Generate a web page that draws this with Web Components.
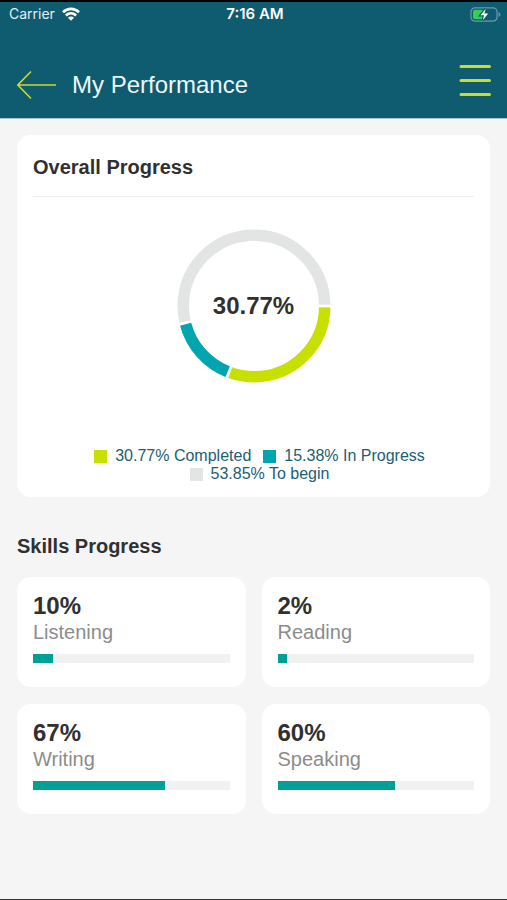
<!DOCTYPE html>
<html lang="en">
<head>
<meta charset="utf-8">
<meta name="viewport" content="width=device-width, initial-scale=1">
<title>My Performance</title>
<style>
body {
  margin: 0;
  background-color: #f5f5f5;
  color: #303030;
  font-family: "Liberation Sans", Arial, sans-serif;
}
</style>
</head>
<body>
<performance-page></performance-page>

<script>
/**
 * Builds a template from a markup string.
 */
function createTemplate (markup) {
  const template = document.createElement('template')
  template.innerHTML = markup
  return template
}

const statusBarTemplate = createTemplate(`
<style>
:host {
  display: grid;
  grid-template-columns: 1fr auto 1fr;
  align-items: center;
  height: 24px;
  padding: 0 6px 0 9px;
  color: #e4eff3;
  font-family: Inter, sans-serif;
  font-size: 14px;
  line-height: 24px;
}

.network {
  display: flex;
  align-items: center;
  gap: 7px;
}

.time {
  color: white;
  font-size: 15px;
  font-weight: 600;
}

.battery {
  justify-self: end;
}

svg {
  display: block;
}
</style>
<div class="network">
  <span>Carrier</span>
  <svg width="18" height="14" viewBox="0 0 18 14" fill="none" stroke="white" stroke-width="2.6">
    <path d="M1 5.2C5.6.8 12.4.8 17 5.2"/>
    <path d="M3.9 8.5c3-2.8 7.2-2.8 10.2 0"/>
    <path d="M9 13.8 5.9 10.7c1.8-1.6 4.4-1.6 6.2 0z" fill="white" stroke="none"/>
  </svg>
</div>
<span class="time"></span>
<svg class="battery" width="31" height="15" viewBox="0 0 31 15">
  <rect x="1" y=".8" width="26" height="13.4" rx="4" fill="none" stroke="#6b9baa" stroke-width="1.2"/>
  <path d="M28.6 5v5c2.4-.9 2.4-4.1 0-5z" fill="#6b9baa"/>
  <rect x="3" y="2.8" width="10.5" height="9.4" rx="2" fill="#33d058"/>
  <path d="M15.7 1.8 10.4 8.2h3.7l-1.4 5 5.5-6.6h-3.8z" fill="white" stroke="#0f5b70" stroke-width="2.4" paint-order="stroke"/>
</svg>
`)

customElements.define('status-bar',
  /**
   * Network, clock and battery row.
   */
  class extends HTMLElement {
    constructor () {
      super()
      this.attachShadow({ mode: 'open' })
        .appendChild(statusBarTemplate.content.cloneNode(true))
      this.time = this.shadowRoot.querySelector('.time')
    }

    connectedCallback () {
      this.time.textContent = this.getAttribute('time')
    }
  })

const headerTemplate = createTemplate(`
<style>
:host {
  display: block;
  background-color: #0f5b70;
  border-bottom: 1px solid #a9c5ce;
}

nav {
  display: flex;
  align-items: center;
  gap: 16px;
  padding: 26px 16px 0;
  height: 66px;
}

h1 {
  flex: 1;
  margin: 0;
  color: #eef6f8;
  font-size: 24px;
  font-weight: normal;
  line-height: 28px;
}

button {
  padding: 0;
  border: 0;
  background: none;
  cursor: pointer;
}

svg {
  display: block;
  fill: none;
  stroke: #cddc29;
}
</style>
<slot name="status"></slot>
<nav>
  <button type="button" aria-label="Back">
    <svg width="40" height="30" viewBox="0 0 40 30" stroke-width="1.6">
      <path d="M15 1.5 1.8 15 15 28.5M1.8 15H40"/>
    </svg>
  </button>
  <h1><slot></slot></h1>
  <button type="button" aria-label="Menu">
    <svg width="32" height="44" viewBox="0 0 32 44" stroke-width="3" stroke-linecap="round">
      <path d="M2 3.5h28.5M2 17.5h28.5M2 31.5h28.5"/>
    </svg>
  </button>
</nav>
`)

customElements.define('app-header',
  /**
   * Top bar with back and menu buttons.
   */
  class extends HTMLElement {
    constructor () {
      super()
      this.attachShadow({ mode: 'open' })
        .appendChild(headerTemplate.content.cloneNode(true))
    }
  })

const donutTemplate = createTemplate(`
<style>
:host {
  display: grid;
  place-items: center;
}

svg, .label {
  grid-area: 1 / 1;
}

svg {
  display: block;
}

.label {
  font-size: 24px;
  font-weight: bold;
  line-height: 28px;
}
</style>
<svg width="154" height="154" viewBox="-77 -77 154 154" fill="none" stroke-width="11.5" aria-hidden="true"></svg>
<span class="label"><slot></slot></span>
`)

customElements.define('donut-chart',
  /**
   * Ring chart, drawn clockwise from three o'clock.
   */
  class extends HTMLElement {
    constructor () {
      super()
      this.attachShadow({ mode: 'open' })
        .appendChild(donutTemplate.content.cloneNode(true))
      this.ring = this.shadowRoot.querySelector('svg')
    }

    connectedCallback () {
      const values = this.getAttribute('values').split(',').map(Number)
      const colors = this.getAttribute('colors').split(',')
      const gap = 0.6
      let start = 0
      this.ring.innerHTML = values.map((value, i) => {
        const arc = `<circle r="70.75" pathLength="100" stroke="${colors[i]}"
          stroke-dasharray="${value - gap} 100" stroke-dashoffset="${-(start + gap / 2)}"/>`
        start += value
        return arc
      }).join('')
    }
  })

const legendTemplate = createTemplate(`
<style>
:host {
  display: flex;
  align-items: center;
  gap: 8px;
  margin-left: 12px;
  color: #1b6075;
  font-size: 16px;
  line-height: 18px;
}

.swatch {
  width: 13px;
  height: 13px;
}
</style>
<span class="swatch"></span>
<span><slot></slot></span>
`)

customElements.define('legend-item',
  /**
   * Colour swatch with its text.
   */
  class extends HTMLElement {
    constructor () {
      super()
      this.attachShadow({ mode: 'open' })
        .appendChild(legendTemplate.content.cloneNode(true))
    }

    connectedCallback () {
      this.shadowRoot.querySelector('.swatch').style.backgroundColor = this.getAttribute('color')
    }
  })

const progressCardTemplate = createTemplate(`
<style>
:host {
  display: block;
  padding: 16px 16px 14px;
  border-radius: 14px;
  background-color: white;
}

h2 {
  margin: 0;
  padding: 4px 0 17px;
  border-bottom: 1px solid #efefef;
  font-size: 20px;
  line-height: 24px;
}

.chart {
  padding: 32px 0 64px;
}

.legend {
  display: flex;
  flex-wrap: wrap;
  justify-content: center;
}
</style>
<h2><slot name="title"></slot></h2>
<div class="chart"><slot></slot></div>
<div class="legend"><slot name="legend"></slot></div>
`)

customElements.define('progress-card',
  /**
   * Card holding a chart and its legend.
   */
  class extends HTMLElement {
    constructor () {
      super()
      this.attachShadow({ mode: 'open' })
        .appendChild(progressCardTemplate.content.cloneNode(true))
    }
  })

const skillTemplate = createTemplate(`
<style>
:host {
  display: block;
  padding: 15px 16px 24px;
  border-radius: 14px;
  background-color: white;
}

.value {
  font-size: 24px;
  font-weight: bold;
  line-height: 28px;
}

.name {
  color: #8c8c8c;
  font-size: 20px;
  line-height: 24px;
}

.track {
  height: 9px;
  margin-top: 10px;
  background-color: #f1f1f1;
}

.bar {
  min-width: 9px;
  height: 100%;
  background-color: #00a099;
}
</style>
<div class="value"></div>
<div class="name" id="name"><slot></slot></div>
<div class="track" role="progressbar" aria-labelledby="name" aria-valuemin="0" aria-valuemax="100">
  <div class="bar"></div>
</div>
`)

customElements.define('skill-card',
  /**
   * Card with the progress of one skill.
   */
  class extends HTMLElement {
    constructor () {
      super()
      this.attachShadow({ mode: 'open' })
        .appendChild(skillTemplate.content.cloneNode(true))
    }

    connectedCallback () {
      const value = this.getAttribute('value')
      this.shadowRoot.querySelector('.value').textContent = `${value}%`
      this.shadowRoot.querySelector('.track').setAttribute('aria-valuenow', value)
      this.shadowRoot.querySelector('.bar').style.width = `${value}%`
    }
  })

const pageTemplate = createTemplate(`
<style>
:host {
  display: block;
  box-sizing: border-box;
  min-height: 100vh;
  border-top: 2px solid black;
  border-bottom: 1px solid #333;
}

main {
  padding: 16px 17px;
}

h2 {
  margin: 37px 0 19px;
  font-size: 20px;
  line-height: 24px;
}

.skills {
  display: grid;
  grid-template-columns: 1fr 1fr;
  gap: 17px 16px;
}
</style>
<app-header>
  <status-bar slot="status" time="7:16 AM"></status-bar>
  My Performance
</app-header>
<main>
  <progress-card>
    <span slot="title">Overall Progress</span>
    <donut-chart values="30.77,15.38,53.85" colors="#c8e000,#00a5b0,#e3e5e5">30.77%</donut-chart>
    <legend-item slot="legend" color="#c8e000">30.77% Completed</legend-item>
    <legend-item slot="legend" color="#00a5b0">15.38% In Progress</legend-item>
    <legend-item slot="legend" color="#e3e5e5">53.85% To begin</legend-item>
  </progress-card>
  <h2>Skills Progress</h2>
  <div class="skills">
    <skill-card value="10">Listening</skill-card>
    <skill-card value="2">Reading</skill-card>
    <skill-card value="67">Writing</skill-card>
    <skill-card value="60">Speaking</skill-card>
  </div>
</main>
`)

customElements.define('performance-page',
  /**
   * The whole performance screen.
   */
  class extends HTMLElement {
    constructor () {
      super()
      this.attachShadow({ mode: 'open' })
        .appendChild(pageTemplate.content.cloneNode(true))
    }
  })
</script>
</body>
</html>
